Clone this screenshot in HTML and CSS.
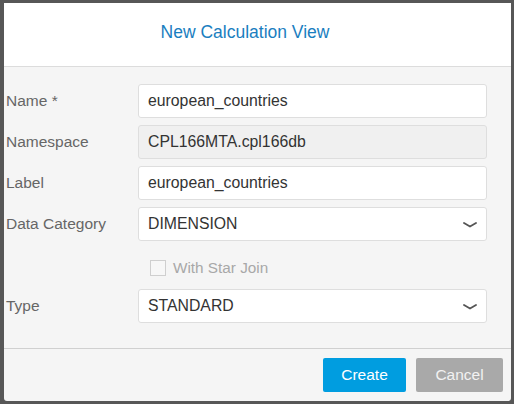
FILE: index.html
```html
<!DOCTYPE html>
<html>
<head>
<meta charset="utf-8">
<link rel="stylesheet" href="styles.css">
</head>
<body>
<div class="dialog">
  <div class="header"><span class="title">New Calculation View</span></div>
  <div class="content">
    <div class="label">Name *</div>
    <div class="field">european_countries</div>
    <div class="label">Namespace</div>
    <div class="field readonly">CPL166MTA.cpl166db</div>
    <div class="label">Label</div>
    <div class="field">european_countries</div>
    <div class="label">Data Category</div>
    <div class="field select">DIMENSION
      <svg class="chev" width="14" height="6" viewBox="0 0 14 6"><path d="M1 1 L7 4.6 L13 1" fill="none" stroke="#555" stroke-width="1.8" stroke-linecap="round" stroke-linejoin="round"/></svg>
    </div>
    <div class="label"></div>
    <div class="check"><span class="box"></span><span>With Star Join</span></div>
    <div class="label">Type</div>
    <div class="field select">STANDARD
      <svg class="chev" width="14" height="6" viewBox="0 0 14 6"><path d="M1 1 L7 4.6 L13 1" fill="none" stroke="#555" stroke-width="1.8" stroke-linecap="round" stroke-linejoin="round"/></svg>
    </div>
  </div>
  <div class="footer">
    <button class="btn create">Create</button>
    <button class="btn cancel">Cancel</button>
  </div>
</div>
</body>
</html>
```

FILE: styles.css
```css
html, body {
  margin: 0;
  padding: 0;
}
body {
  background: #575757;
  font-family: "Liberation Sans", Arial, sans-serif;
  padding: 3px 3px 3px 4px;
  height: 404px;
  box-sizing: border-box;
}
.dialog {
  width: 507px;
  height: 398px;
  background: #f5f5f5;
  border-radius: 0 0 3px 3px;
  display: flex;
  flex-direction: column;
  overflow: hidden;
}
.header {
  height: 63px;
  background: #fff;
  border-bottom: 1px solid #dcdcdc;
  display: flex;
  align-items: center;
  justify-content: center;
  padding-right: 25px;
  box-sizing: content-box;
}
.title {
  color: #1a7ec0;
  font-size: 17.5px;
  margin-top: -5px;
}
.content {
  display: grid;
  grid-template-columns: 132px 349px;
  grid-auto-rows: 34px;
  row-gap: 7px;
  padding: 17px 0 25px 2px;
  border-bottom: 1px solid #d0d0d0;
}
.label {
  font-size: 15.5px;
  color: #666;
  display: flex;
  align-items: center;
}
.field {
  box-sizing: border-box;
  background: #fff;
  border: 1px solid #dedede;
  border-radius: 3px;
  font-size: 15.8px;
  color: #333;
  padding-left: 9px;
  display: flex;
  align-items: center;
  position: relative;
}
.field.readonly {
  background: #f0f0f0;
}
.chev {
  position: absolute;
  right: 9px;
  top: 14px;
}
.check {
  display: flex;
  align-items: center;
  padding: 6px 0 0 12px;
  gap: 7px;
  color: #a8a8a8;
  font-size: 15.3px;
}
.box {
  width: 16px;
  height: 16px;
  box-sizing: border-box;
  border: 1px solid #cfcfcf;
  background: #f7f7f7;
}
.footer {
  flex: 1;
  display: flex;
  justify-content: flex-end;
  align-items: flex-start;
  padding: 9px 8px 0 0;
  gap: 10px;
}
.btn {
  height: 34px;
  border: none;
  border-radius: 2px;
  font-family: "Liberation Sans", Arial, sans-serif;
  font-size: 15.5px;
  color: #fff;
  padding: 0;
}
.create {
  width: 83px;
  background: #009de0;
}
.cancel {
  width: 87px;
  background: #a9a9a9;
  color: #f2f2f2;
}
```
